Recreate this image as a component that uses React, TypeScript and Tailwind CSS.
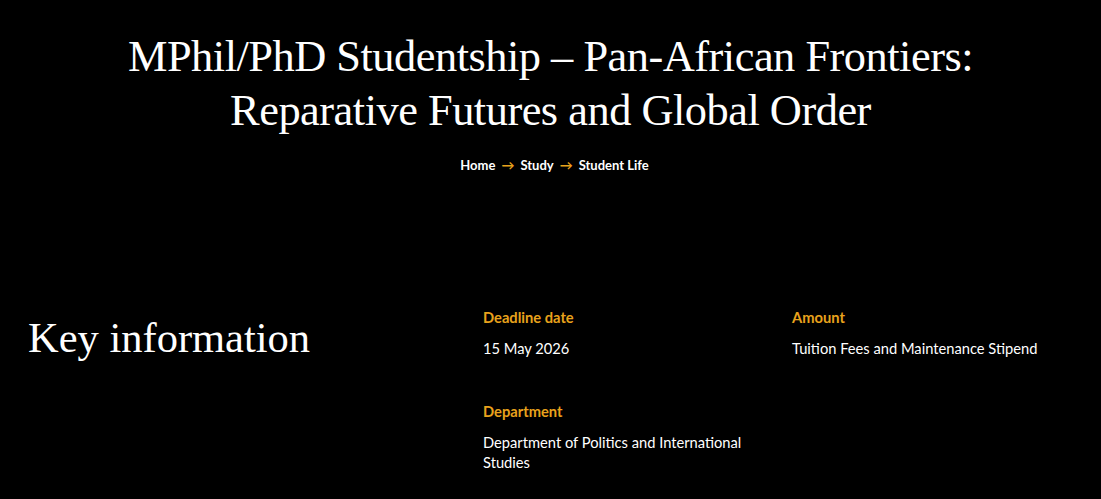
import React from 'react';

const serif = { fontFamily: '"Liberation Serif", "DejaVu Serif", serif' };

interface InfoItem {
  label: string;
  value: string;
}

const items: InfoItem[] = [
  { label: 'Deadline date', value: '15 May 2026' },
  { label: 'Amount', value: 'Tuition Fees and Maintenance Stipend' },
  { label: 'Department', value: 'Department of Politics and International Studies' },
];

const App: React.FC = () => {
  return (
    <div className="min-h-[499px] bg-black text-white font-['Lato','Noto_Sans',sans-serif]">
      {/* Hero */}
      <div className="flex flex-col items-center pt-[29px]">
        <h1
          className="text-center text-[44.4px] leading-[54px] tracking-[-0.5px] text-white font-normal"
          style={serif}
        >
          MPhil/PhD Studentship – Pan-African Frontiers:
          <br />
          Reparative Futures and Global Order
        </h1>
        <nav className="mt-[19px] ml-[8px] flex items-center gap-[6px] text-[13px] font-bold text-white">
          <span>Home</span>
          <span className="text-[#e8a21c]">→</span>
          <span>Study</span>
          <span className="text-[#e8a21c]">→</span>
          <span>Student Life</span>
        </nav>
      </div>

      {/* Key information */}
      <div className="mt-[131px] flex px-[28px]">
        <h2 className="w-[455px] shrink-0 text-[42.5px] leading-[50px] mt-[6px]" style={serif}>
          Key information
        </h2>
        <div className="grid grid-cols-[285px_285px] gap-x-[24px] gap-y-[43px]">
          {items.map((item) => (
            <div key={item.label}>
              <p className="text-[14.7px] font-bold leading-[20px] text-[#e8a21c]">{item.label}</p>
              <p className="mt-[11px] text-[14.7px] leading-[20px] text-white">{item.value}</p>
            </div>
          ))}
        </div>
      </div>
    </div>
  );
};

export default App;
